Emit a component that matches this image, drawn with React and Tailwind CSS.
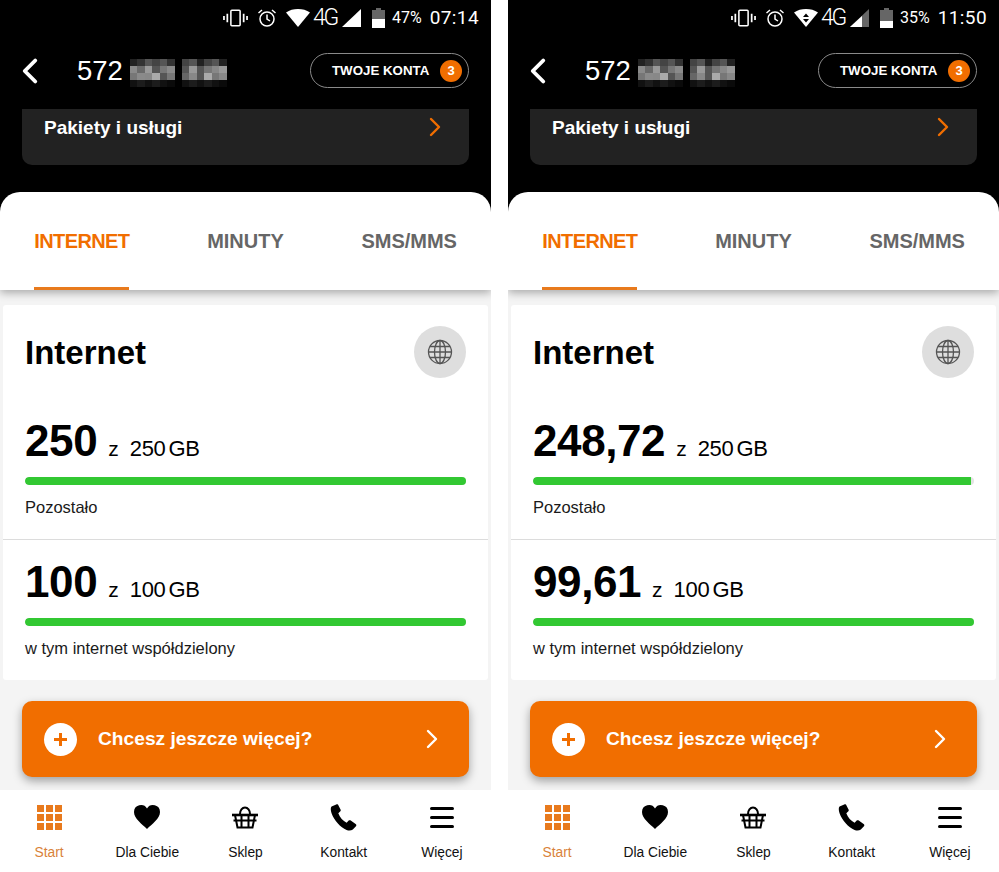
import { ChevronLeft, ChevronRight } from 'lucide-react';

const mosaicA = [
  ['#222', '#333', '#555', '#444', '#555', '#333'],
  ['#8a8a8a', '#6a6a6a', '#999', '#555', '#777', '#8a8a8a'],
  ['#777', '#8a8a8a', '#888', '#aaa', '#555', '#777'],
  ['#111', '#1c1c1c', '#111', '#1c1c1c', '#111', '#0a0a0a'],
];
const mosaicB = [
  ['#444', '#555', '#222', '#444', '#555', '#222'],
  ['#555', '#999', '#555', '#777', '#888', '#999'],
  ['#666', '#888', '#555', '#aaa', '#777', '#888'],
  ['#111', '#1c1c1c', '#111', '#1c1c1c', '#111', '#0a0a0a'],
];

function Mosaic({ cells }) {
  return (
    <div className="grid grid-cols-[repeat(6,7.5px)] grid-rows-[repeat(4,7px)] blur-[0.6px]">
      {cells.flat().map((color, i) => (
        <div key={i} style={{ backgroundColor: color }} />
      ))}
    </div>
  );
}

function StatusBar({ wifiArrows, signalHalf, batteryLevel, percent, time }) {
  return (
    <div className="h-[34px] flex items-center justify-end pr-[12px] pt-[1px] text-white font-['Roboto',sans-serif]">
      <svg width="25" height="20" viewBox="0 0 26 20" fill="none" stroke="white" className="mr-[9px]">
        <rect x="8.200" y="2" width="9.600" height="16" rx="1" strokeWidth="1.600" />
        <path d="M4.500 5.500v9M21.500 5.500v9M1 8v4M25 8v4" strokeWidth="1.800" />
      </svg>
      <svg width="20" height="20" viewBox="0 0 20 20" fill="none" stroke="white" strokeWidth="1.500" className="mr-[9px]">
        <circle cx="10" cy="11" r="7" />
        <path d="M10 6.500V11l3 2M1.500 5l3.500-3M18.500 5L15 2" />
      </svg>
      <svg width="24" height="18" viewBox="0 0 24 18" className="mr-[3px]">
        <path d="M0 3.500C3.500 1 7.500 0 12 0s8.500 1 12 3.500L12 18z" fill="white" />
        {wifiArrows && <path d="M12 4.500l-3 3.500h6zM12 13.500l-3-3.500h6z" fill="#000" />}
      </svg>
      <span className="text-[23px] leading-none tracking-[-2.200px] font-light mr-[5px]">4G</span>
      <svg width="20" height="18" viewBox="0 0 20 18" className="mr-[10px]">
        <path d="M19 0v18H0z" fill={signalHalf ? '#666' : 'white'} />
        {signalHalf && <path d="M12 7v11H0z" fill="white" />}
      </svg>
      <div className="relative w-[13px] h-[20px] mr-[7px]">
        <div className="absolute left-[4px] top-0 w-[5px] h-[2px] bg-[#666]" />
        <div className="absolute left-0 top-[2px] w-[13px] h-[18px] bg-[#666]" />
        <div className="absolute left-0 bottom-0 w-[13px] bg-white" style={{ height: `${batteryLevel}px` }} />
      </div>
      <span className="text-[16px] leading-none mr-[8px]">{percent}</span>
      <span className="text-[19px] leading-none tracking-[0.400px]">{time}</span>
    </div>
  );
}

function Header() {
  return (
    <div className="h-[75px] flex items-center pl-[18px] pr-[22px]">
      <ChevronLeft size={42} strokeWidth={2.200} color="white" className="-ml-[9px] -mt-[2px] shrink-0" />
      <span className="ml-[26px] text-[27.500px] text-white leading-none -mt-[2px]">572</span>
      <div className="ml-[7px] flex gap-[7px] mt-[3px]">
        <Mosaic cells={mosaicA} />
        <Mosaic cells={mosaicB} />
      </div>
      <div className="ml-auto w-[159px] h-[35px] -mt-[2px] rounded-full border border-[#8a8a8a] flex items-center pl-[21px] pr-[6px]">
        <span className="text-white text-[13.300px] font-bold whitespace-nowrap">TWOJE KONTA</span>
        <span className="ml-auto w-[22px] h-[22px] rounded-full bg-[#f16e00] text-white text-[13px] font-bold flex items-center justify-center">3</span>
      </div>
    </div>
  );
}

function Tabs() {
  return (
    <div className="h-[98px] bg-white rounded-t-[20px] grid grid-cols-3 relative z-10 shadow-[0_3px_8px_rgba(0,0,0,0.3)]">
      <div className="flex justify-center">
        <div className="h-full border-b-[3px] border-[#e87a1d] text-[#f16e00] text-[20px] tracking-[-0.600px] font-bold pt-[37px] leading-[24px]">INTERNET</div>
      </div>
      <div className="text-center text-[#666] text-[20px] font-bold pt-[37px] leading-[24px]">MINUTY</div>
      <div className="text-center text-[#666] text-[20px] font-bold pt-[37px] leading-[24px]">SMS/MMS</div>
    </div>
  );
}

function Usage({ value, total, label, fill, height, top, border }) {
  return (
    <div className={`px-[22px] ${height} ${top} ${border ? 'border-b border-[#dcdcdc]' : ''}`}>
      <div className="flex items-baseline h-[49px]">
        <span className="text-[44px] leading-[49px] font-bold text-black tracking-[-0.400px]">{value}</span>
        <span className="ml-[11px] text-[21px] text-black">z</span>
        <span className="ml-[11px] text-[22px] text-black tracking-[-0.300px]">{total}<span className="ml-[3px]">GB</span></span>
      </div>
      <div className="mt-[12px] h-[8px] rounded-full bg-[#e3e3e3] overflow-hidden">
        <div className="h-full bg-[#32c832] rounded-l-full" style={{ width: fill }} />
      </div>
      <div className="mt-[12px] text-[16.500px] leading-[20px] text-[#1a1a1a]">{label}</div>
    </div>
  );
}

function Globe() {
  return (
    <svg width="26" height="26" viewBox="0 0 26 26" fill="none" stroke="#555" strokeWidth="1.300">
      <circle cx="13" cy="13" r="11.500" />
      <ellipse cx="13" cy="13" rx="5.500" ry="11.500" />
      <path d="M13 1.500v23M1.500 13h23M3 7.500h20M3 18.500h20" />
    </svg>
  );
}

function NavIcon({ name }) {
  if (name === 'grid') {
    return (
      <div className="grid grid-cols-3 gap-[2px]">
        {[...Array(9)].map((_, i) => (
          <div key={i} className="w-[7px] h-[7px] bg-[#e87a1d]" />
        ))}
      </div>
    );
  }
  if (name === 'heart') {
    return (
      <svg width="26" height="24" viewBox="0 0 26 24" fill="black">
        <path d="M13 24C8 19 0 13.500 0 7a7 7 0 0 1 13-3.500A7 7 0 0 1 26 7c0 6.500-8 12-13 17z" />
      </svg>
    );
  }
  if (name === 'basket') {
    return (
      <svg width="26" height="26" viewBox="0 0 26 26" fill="none" stroke="black" strokeWidth="2">
        <path d="M8 10a5 6.500 0 0 1 10 0" />
        <path d="M0 11h26" strokeWidth="2.600" />
        <path d="M3 11l2.500 12.500h15L23 11M1.500 16.500h23M9.500 11v12.500M16.500 11v12.500" />
      </svg>
    );
  }
  if (name === 'phone') {
    return (
      <svg width="27" height="27" viewBox="0 0 26 26" fill="black">
        <path d="M6 0.500L1.500 2.500C0.500 3.500 0.500 6 1.500 9c2.500 7 8.500 13.500 14.500 16 2.500 1 4.500 0.500 6-0.500l3-3c0.500-0.500 0.500-1.500 0-2l-5-3.500c-0.500-0.500-1.500-0.500-2 0l-2 2c-3.500-1.500-6.500-5-8-9l2-2c0.500-0.500 0.500-1.500 0-2L7.800 0.800C7.300 0.300 6.600 0.200 6 0.500z" />
      </svg>
    );
  }
  return (
    <div className="flex flex-col gap-[6px]">
      <div className="w-[24px] h-[3px] bg-black rounded-full" />
      <div className="w-[24px] h-[3px] bg-black rounded-full" />
      <div className="w-[24px] h-[3px] bg-black rounded-full" />
    </div>
  );
}

const navItems = [
  ['grid', 'Start'],
  ['heart', 'Dla Ciebie'],
  ['basket', 'Sklep'],
  ['phone', 'Kontakt'],
  ['menu', 'Więcej'],
];

function BottomNav() {
  return (
    <div className="h-[82px] bg-white grid grid-cols-5 relative z-10">
      {navItems.map(([icon, label], i) => (
        <div key={label} className="flex flex-col items-center">
          <div className="h-[28px] mt-[13px] flex items-center justify-center">
            <NavIcon name={icon} />
          </div>
          <span className={`mt-[13px] text-[13.800px] leading-[18px] ${i === 0 ? 'text-[#d9823a]' : 'text-[#111]'}`}>{label}</span>
        </div>
      ))}
    </div>
  );
}

function Phone({ status, first, second }) {
  return (
    <div className="w-[491px] h-[872px] bg-black flex flex-col font-['Liberation_Sans',sans-serif] overflow-hidden">
      <StatusBar {...status} />
      <Header />
      <div className="mx-[22px] h-[56px] bg-[#222] rounded-b-[10px] flex justify-between pl-[22px] pr-[18px] pt-[7px]">
        <span className="text-white text-[19px] font-bold leading-[24px]">Pakiety i usługi</span>
        <ChevronRight size={32} strokeWidth={1.800} color="#f16e00" className="-mt-[5px]" />
      </div>
      <div className="h-[27px] shrink-0" />
      <Tabs />
      <div className="h-[500px] bg-[#f4f4f4] pt-[15px] relative">
        <div className="mx-[3px] h-[375px] bg-white rounded-[3px]">
          <div className="h-[96px] px-[22px] pt-[21px] flex justify-between">
            <span className="text-[33px] leading-[54px] font-bold text-black">Internet</span>
            <div className="w-[52px] h-[52px] rounded-full bg-[#dedede] flex items-center justify-center">
              <Globe />
            </div>
          </div>
          <Usage {...first} height="h-[139px]" top="pt-[15px]" border label="Pozostało" />
          <Usage {...second} height="h-[140px]" top="pt-[17px]" label="w tym internet współdzielony" />
        </div>
        <div className="mx-[22px] mt-[21px] h-[76px] bg-[#f16e00] rounded-[10px] shadow-[0_4px_10px_rgba(0,0,0,0.35)] flex items-center pl-[22px] pr-[21px]">
          <div className="w-[33px] h-[33px] rounded-full bg-white flex items-center justify-center">
            <svg width="15" height="15" viewBox="0 0 15 15" stroke="#f16e00" strokeWidth="3">
              <path d="M7.500 1v13M1 7.500h13" />
            </svg>
          </div>
          <span className="ml-[21px] pt-[1px] text-white text-[19.200px] font-bold">Chcesz jeszcze więcej?</span>
          <ChevronRight size={32} strokeWidth={1.800} color="white" className="ml-auto" />
        </div>
      </div>
      <BottomNav />
    </div>
  );
}

export default function App() {
  return (
    <div className="w-[999px] h-[872px] bg-white flex justify-between overflow-hidden">
      <Phone
        status={{ wifiArrows: false, signalHalf: false, batteryLevel: 9, percent: '47%', time: '07:14' }}
        first={{ value: '250', total: '250', fill: '100%' }}
        second={{ value: '100', total: '100', fill: '100%' }}
      />
      <Phone
        status={{ wifiArrows: true, signalHalf: true, batteryLevel: 7, percent: '35%', time: '11:50' }}
        first={{ value: '248,72', total: '250', fill: '99.4%' }}
        second={{ value: '99,61', total: '100', fill: '100%' }}
      />
    </div>
  );
}
